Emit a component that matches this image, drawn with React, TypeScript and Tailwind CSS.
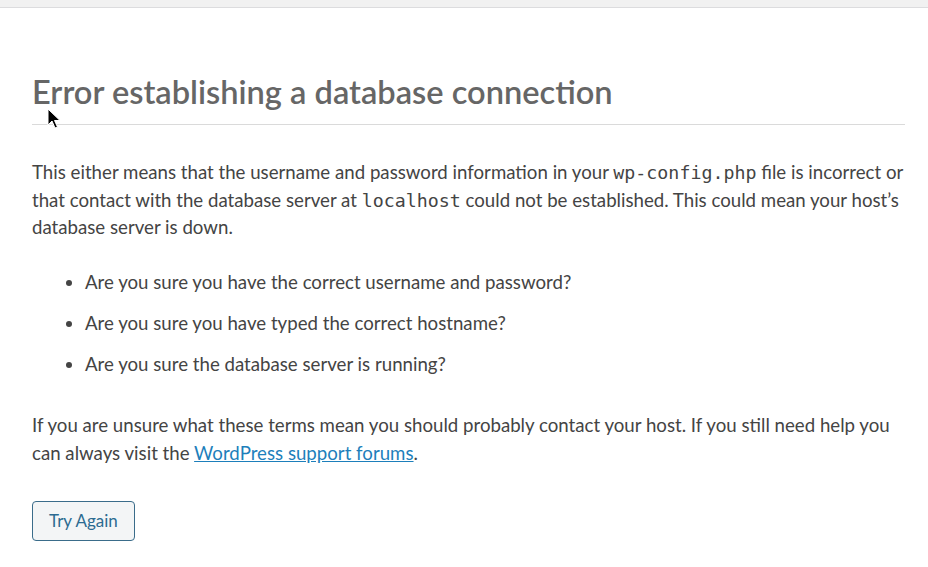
import React from 'react';

const sans = { fontFamily: 'Lato, "Noto Sans", sans-serif' };
const mono = { fontFamily: '"DejaVu Sans Mono", monospace' };

const Cursor: React.FC = () => (
  <svg className="absolute left-[47px] top-[108px]" width="14" height="22" viewBox="0 0 14 22">
    <path d="M1 1 L1 17 L5 13 L8 20 L10.5 19 L7.5 12.5 L13 12.5 Z" fill="#000" stroke="#fff" strokeWidth="1" strokeLinejoin="round" />
  </svg>
);

const App: React.FC = () => {
  const checks = [
    'Are you sure you have the correct username and password?',
    'Are you sure you have typed the correct hostname?',
    'Are you sure the database server is running?',
  ];

  return (
    <div className="relative min-h-[567px] bg-[#f1f1f1] pt-[7px] overflow-hidden" style={sans}>
      <div className="min-h-[560px] bg-white border-t border-[#dcdcde] pl-[32px] pr-[23px] pt-[63px] pb-10 text-[#444] text-[18.67px] leading-[27.5px]">
        <h1 className="text-[32.6px] leading-[42px] font-semibold text-[#666] border-b border-[#dadada] pb-[11px]">
          Error establishing a database connection
        </h1>
        <p className="mt-[34px]">
          This either means that the username and password information in your{' '}
          <code style={mono} className="text-[18.3px]">wp-config.php</code> file is incorrect or that contact with the database
          server at <code style={mono} className="text-[18.3px]">localhost</code> could not be established. This could mean your
          host’s database server is down.
        </p>
        <ul className="mt-[27px] pl-[53px] list-disc">
          {checks.map(c => (
            <li key={c} className="mb-[13.5px]">{c}</li>
          ))}
        </ul>
        <p className="mt-[34px]">
          If you are unsure what these terms mean you should probably contact your host. If you still need help you can
          always visit the{' '}
          <a href="#" className="text-[#1d7fbb] underline">WordPress support forums</a>.
        </p>
        <p className="mt-[34px]">
          <a
            href="#"
            className="inline-block h-[40px] leading-[38px] px-[16px] text-[17px] text-[#2c6b91] bg-[#f3f5f6] border border-[#3a6c8a] rounded-[4px]"
          >
            Try Again
          </a>
        </p>
      </div>
      <Cursor />
    </div>
  );
};

export default App;
